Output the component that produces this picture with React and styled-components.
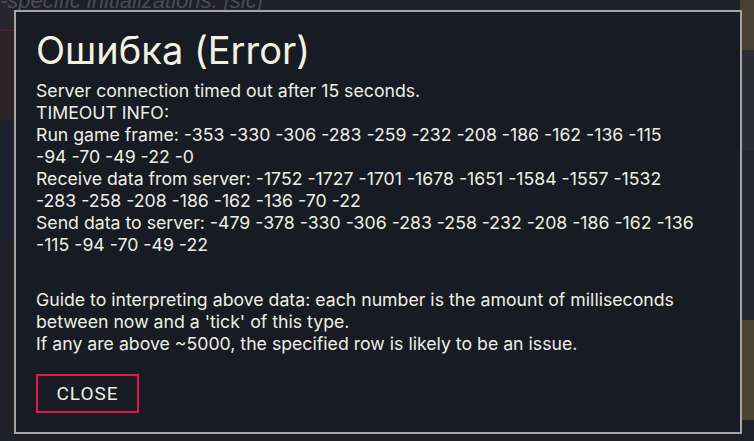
import React from "react";
import styled, { createGlobalStyle } from "styled-components";

const Global = createGlobalStyle`
  html, body {
    margin: 0;
    padding: 0;
    background: #1e1f26;
    width: 754px;
    height: 441px;
    overflow: hidden;
  }
  * { box-sizing: border-box; }
`;

const Page = styled.div`
  position: relative;
  width: 754px;
  height: 441px;
  display: grid;
  grid-template-columns: 14px 1fr 14px;
  background: #1f2027;
  font-family: "Noto Sans", sans-serif;
  overflow: hidden;
`;

const Side = styled.div`
  display: flex;
  flex-direction: column;
`;

const Patch = styled.div`
  height: ${(p) => p.h}px;
  background: ${(p) => p.bg};
  border-top: ${(p) => (p.line ? `1px solid ${p.line}` : "none")};
`;

const Middle = styled.div`
  display: flex;
  flex-direction: column;
`;

const BgHeading = styled.div`
  height: 30px;
  margin-left: -14px;
  margin-top: -12px;
  font-family: "Liberation Sans", sans-serif;
  font-style: italic;
  font-size: 22px;
  color: #4b4b55;
  white-space: nowrap;
`;

const Overlay = styled.div`
  position: absolute;
  left: 14px;
  top: 10px;
  width: 728px;
  height: 424px;
  background: #181a24;
  border: 2px solid #a6a59f;
  padding: 16px 20px 0 20px;
  color: #efeee4;
  font-family: "Inter", "Noto Sans", sans-serif;
`;

const Title = styled.h1`
  margin: 0 0 8px 0;
  font-weight: 400;
  font-size: 38px;
  line-height: 44px;
  color: #f3f1e0;
`;

const Body = styled.div`
  font-size: 17.7px;
  line-height: 22px;
`;

const Line = styled.div`
  min-height: 22px;
  white-space: nowrap;
`;

const Gap = styled.div`
  height: 33px;
`;

const CloseButton = styled.button`
  margin-top: 19px;
  width: 103px;
  height: 39px;
  background: transparent;
  border: 2px solid #e6174f;
  color: #efeee4;
  font-family: "Roboto", sans-serif;
  font-size: 19px;
  letter-spacing: 1px;
  padding: 0;
  cursor: pointer;
`;

export default function App() {
  return (
    <>
      <Global />
      <Page>
        <Side>
          <Patch h={30} bg="#26262c" />
          <Patch h={90} bg="#2b2228" line="#5a2230" />
          <Patch h={120} bg="#1d2231" />
          <Patch h={201} bg="#212229" />
        </Side>
        <Middle>
          <BgHeading>-specific initializations. [sic]</BgHeading>
        </Middle>
        <Side>
          <Patch h={50} bg="#4a3f33" />
          <Patch h={100} bg="#2a2b33" />
          <Patch h={170} bg="#24252c" />
          <Patch h={100} bg="#4a4430" />
          <Patch h={21} bg="#1f2027" />
        </Side>
        <Overlay>
          <Title>Ошибка (Error)</Title>
          <Body>
            <Line>Server connection timed out after 15 seconds.</Line>
            <Line>TIMEOUT INFO:</Line>
            <Line>
              Run game frame: -353 -330 -306 -283 -259 -232 -208 -186 -162 -136 -115
            </Line>
            <Line>-94 -70 -49 -22 -0</Line>
            <Line>
              Receive data from server: -1752 -1727 -1701 -1678 -1651 -1584 -1557 -1532
            </Line>
            <Line>-283 -258 -208 -186 -162 -136 -70 -22</Line>
            <Line>
              Send data to server: -479 -378 -330 -306 -283 -258 -232 -208 -186 -162 -136
            </Line>
            <Line>-115 -94 -70 -49 -22</Line>
            <Gap />
            <Line>
              Guide to interpreting above data: each number is the amount of milliseconds
            </Line>
            <Line>between now and a 'tick' of this type.</Line>
            <Line>If any are above ~5000, the specified row is likely to be an issue.</Line>
          </Body>
          <CloseButton>CLOSE</CloseButton>
        </Overlay>
      </Page>
    </>
  );
}
